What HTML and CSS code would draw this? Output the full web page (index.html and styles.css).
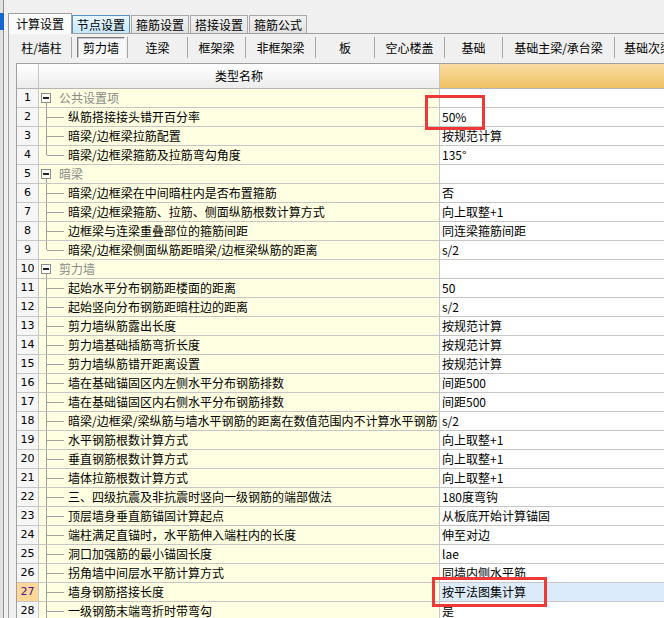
FILE: index.html
```html
<!DOCTYPE html>
<html lang="zh-CN">
<head>
<meta charset="utf-8">
<title>计算设置</title>
<link rel="stylesheet" href="styles.css">
</head>
<body>
<div class="app">
  <div class="side"><div class="side-mark"></div></div>
  <div class="main">
    <div class="tabs">
      <div class="tab active">计算设置</div>
      <div class="tab hover">节点设置</div>
      <div class="tab">箍筋设置</div>
      <div class="tab">搭接设置</div>
      <div class="tab">箍筋公式</div>
    </div>
    <div class="panel">
      <div class="toolbar">
        <div class="tb">柱/墙柱</div>
        <div class="tb"><span class="pressed">剪力墙</span></div>
        <div class="tb">连梁</div>
        <div class="tb">框架梁</div>
        <div class="tb">非框架梁</div>
        <div class="tb">板</div>
        <div class="tb">空心楼盖</div>
        <div class="tb">基础</div>
        <div class="tb">基础主梁/承台梁</div>
        <div class="tb last">基础次梁</div>
      </div>
      <div class="grid">
        <div class="row hdr">
          <div class="num"></div>
          <div class="name">类型名称</div>
          <div class="val"></div>
        </div>

        <div class="row"><div class="num">1</div><div class="name group"><span class="box"></span>公共设置项</div><div class="val"></div></div>
        <div class="row"><div class="num">2</div><div class="name"><span class="br"></span>纵筋搭接接头错开百分率</div><div class="val">50%</div></div>
        <div class="row"><div class="num">3</div><div class="name"><span class="br"></span>暗梁/边框梁拉筋配置</div><div class="val">按规范计算</div></div>
        <div class="row"><div class="num">4</div><div class="name"><span class="br end"></span>暗梁/边框梁箍筋及拉筋弯勾角度</div><div class="val">135°</div></div>

        <div class="row"><div class="num">5</div><div class="name group"><span class="box"></span>暗梁</div><div class="val"></div></div>
        <div class="row"><div class="num">6</div><div class="name"><span class="br"></span>暗梁/边框梁在中间暗柱内是否布置箍筋</div><div class="val">否</div></div>
        <div class="row"><div class="num">7</div><div class="name"><span class="br"></span>暗梁/边框梁箍筋、拉筋、侧面纵筋根数计算方式</div><div class="val">向上取整+1</div></div>
        <div class="row"><div class="num">8</div><div class="name"><span class="br"></span>边框梁与连梁重叠部位的箍筋间距</div><div class="val">同连梁箍筋间距</div></div>
        <div class="row"><div class="num">9</div><div class="name"><span class="br end"></span>暗梁/边框梁侧面纵筋距暗梁/边框梁纵筋的距离</div><div class="val">s/2</div></div>

        <div class="row"><div class="num">10</div><div class="name group"><span class="box"></span>剪力墙</div><div class="val"></div></div>
        <div class="row"><div class="num">11</div><div class="name"><span class="br"></span>起始水平分布钢筋距楼面的距离</div><div class="val">50</div></div>
        <div class="row"><div class="num">12</div><div class="name"><span class="br"></span>起始竖向分布钢筋距暗柱边的距离</div><div class="val">s/2</div></div>
        <div class="row"><div class="num">13</div><div class="name"><span class="br"></span>剪力墙纵筋露出长度</div><div class="val">按规范计算</div></div>
        <div class="row"><div class="num">14</div><div class="name"><span class="br"></span>剪力墙基础插筋弯折长度</div><div class="val">按规范计算</div></div>
        <div class="row"><div class="num">15</div><div class="name"><span class="br"></span>剪力墙纵筋错开距离设置</div><div class="val">按规范计算</div></div>
        <div class="row"><div class="num">16</div><div class="name"><span class="br"></span>墙在基础锚固区内左侧水平分布钢筋排数</div><div class="val">间距500</div></div>
        <div class="row"><div class="num">17</div><div class="name"><span class="br"></span>墙在基础锚固区内右侧水平分布钢筋排数</div><div class="val">间距500</div></div>
        <div class="row"><div class="num">18</div><div class="name"><span class="br"></span>暗梁/边框梁/梁纵筋与墙水平钢筋的距离在数值范围内不计算水平钢筋</div><div class="val">s/2</div></div>
        <div class="row"><div class="num">19</div><div class="name"><span class="br"></span>水平钢筋根数计算方式</div><div class="val">向上取整+1</div></div>
        <div class="row"><div class="num">20</div><div class="name"><span class="br"></span>垂直钢筋根数计算方式</div><div class="val">向上取整+1</div></div>
        <div class="row"><div class="num">21</div><div class="name"><span class="br"></span>墙体拉筋根数计算方式</div><div class="val">向上取整+1</div></div>
        <div class="row"><div class="num">22</div><div class="name"><span class="br"></span>三、四级抗震及非抗震时竖向一级钢筋的端部做法</div><div class="val">180度弯钩</div></div>
        <div class="row"><div class="num">23</div><div class="name"><span class="br"></span>顶层墙身垂直筋锚固计算起点</div><div class="val">从板底开始计算锚固</div></div>
        <div class="row"><div class="num">24</div><div class="name"><span class="br"></span>端柱满足直锚时，水平筋伸入端柱内的长度</div><div class="val">伸至对边</div></div>
        <div class="row"><div class="num">25</div><div class="name"><span class="br"></span>洞口加强筋的最小锚固长度</div><div class="val">lae</div></div>
        <div class="row"><div class="num">26</div><div class="name"><span class="br"></span>拐角墙中间层水平筋计算方式</div><div class="val">同墙内侧水平筋</div></div>
        <div class="row sel"><div class="num">27</div><div class="name"><span class="br"></span>墙身钢筋搭接长度</div><div class="val">按平法图集计算</div></div>
        <div class="row"><div class="num">28</div><div class="name"><span class="br"></span>一级钢筋末端弯折时带弯勾</div><div class="val">是</div></div>
      </div>
    </div>
  </div>
  <div class="mark mark-a"></div>
  <div class="mark mark-b"></div>
</div>
</body>
</html>
```
FILE: styles.css
```css
* { box-sizing: border-box; }
html, body { margin: 0; padding: 0; }
body {
  width: 664px;
  height: 618px;
  overflow: hidden;
  background: #f0f0f0;
  font-family: "Noto Sans CJK SC", "Noto Sans", sans-serif;
  font-size: 12px;
  color: #000;
}
.app {
  position: relative;
  display: flex;
  height: 618px;
}
.side {
  width: 8px;
  flex: none;
  background: linear-gradient(to right, #e2e2e2 0 3px, #8e8e8e 3px 4px, #f0f0f0 4px 8px);
}
.side-mark {
  margin-top: 13px;
  width: 4px;
  height: 17px;
  background: #1464d2;
}
.main {
  flex: 1;
  min-width: 0;
  display: flex;
  flex-direction: column;
}

/* tabs */
.tabs {
  margin-top: 13px;
  height: 21px;
  display: flex;
  align-items: flex-end;
  border-bottom: 1px solid #a0a0a0;
}
.tab {
  height: 18px;
  line-height: 17px;
  padding: 0 4px;
  margin-left: 1px;
  border: 1px solid #a8a8a8;
  border-bottom: none;
  background: linear-gradient(#f2f2f2, #e2e2e2);
  white-space: nowrap;
}
.tab.active {
  position: relative;
  height: 21px;
  line-height: 19px;
  padding: 0 7px;
  margin-left: 0;
  margin-bottom: -1px;
  background: #fafafa;
  border-color: #a0a0a0;
}
.tab.hover {
  margin-left: 0;
  border-color: #5a8fc0;
  background: linear-gradient(#eaf6fd, #c4e6fb);
}

/* panel */
.panel {
  flex: 1;
  border-left: 1px solid #a0a0a0;
  display: flex;
  flex-direction: column;
  min-height: 0;
}
.toolbar {
  height: 29px;
  padding: 3px 0 0 3px;
  display: grid;
  grid-template-columns: 60px 56px 60px 58px 70px 59px 70px 58px 112px 80px;
  align-items: start;
}
.tb {
  height: 21px;
  line-height: 21px;
  text-align: center;
  border-right: 1px solid #a6a6a6;
  white-space: nowrap;
  overflow: hidden;
}
.tb.last {
  border-right: none;
  text-align: left;
  padding-left: 9px;
}
.pressed {
  display: block;
  margin: 0 2px 0 5px;
  height: 21px;
  line-height: 19px;
  border: 1px solid;
  border-color: #7a7a7a #ffffff #ffffff #7a7a7a;
  background: #f7f7f7;
  box-shadow: inset 1px 1px 0 #c8c8c8;
}

/* grid */
.grid {
  flex: 1;
  margin-left: 7px;
  border-top: 1px solid #a0a0a0;
  border-left: 1px solid #a0a0a0;
  background: #fff;
  overflow: hidden;
}
.row {
  display: flex;
  height: 19px;
}
.row > div {
  border-bottom: 1px solid #c6c6c6;
  line-height: 18px;
  white-space: nowrap;
  overflow: hidden;
}
.num {
  width: 22px;
  flex: none;
  text-align: center;
  background: #f6f6f6;
  border-right: 1px solid #c6c6c6;
  font-family: "DejaVu Sans", sans-serif;
  font-size: 11px;
}
.name {
  width: 401px;
  flex: none;
  display: flex;
  align-items: center;
  background: #ffffe1;
  border-right: 1px solid #c6c6c6;
}
.val {
  flex: 1;
  padding-left: 2px;
  background: #fff;
}

.row.hdr { height: 25px; }
.row.hdr > div {
  line-height: 24px;
  border-bottom-color: #b4b4b4;
}
.hdr .num,
.hdr .name {
  background: linear-gradient(#ffffff, #ececec);
}
.hdr .name {
  justify-content: center;
}
.hdr .val {
  background: linear-gradient(#f9dca2, #f1c264);
}

/* tree */
.group { color: #8a8a8a; }
.box {
  position: relative;
  width: 10px;
  height: 10px;
  margin: 0 8px 0 2px;
  flex: none;
  border: 1px solid #8c8c8c;
  background: #fff;
}
.box::before {
  content: "";
  position: absolute;
  left: 1px;
  right: 1px;
  top: 3px;
  height: 2px;
  background: #222;
}
.box::after {
  content: "";
  position: absolute;
  left: 4px;
  top: 9px;
  width: 1px;
  height: 6px;
  background: #a0a0a0;
}
.br {
  position: relative;
  width: 29px;
  height: 19px;
  flex: none;
  align-self: flex-start;
}
.br::before {
  content: "";
  position: absolute;
  left: 7px;
  top: -1px;
  width: 1px;
  height: 20px;
  background: #a0a0a0;
}
.br.end::before { height: 10px; }
.br::after {
  content: "";
  position: absolute;
  left: 8px;
  top: 9px;
  width: 17px;
  height: 1px;
  background: #a0a0a0;
}

/* selected row */
.row.sel .num {
  background: #ffd797;
  color: #4a1590;
}
.row.sel .val {
  background: #dcebfb;
}

/* red annotation boxes */
.mark {
  position: absolute;
  border: 3px solid #f03838;
}
.mark-a {
  left: 425px;
  top: 95px;
  width: 60px;
  height: 35px;
}
.mark-b {
  left: 432px;
  top: 577px;
  width: 115px;
  height: 30px;
}
```
